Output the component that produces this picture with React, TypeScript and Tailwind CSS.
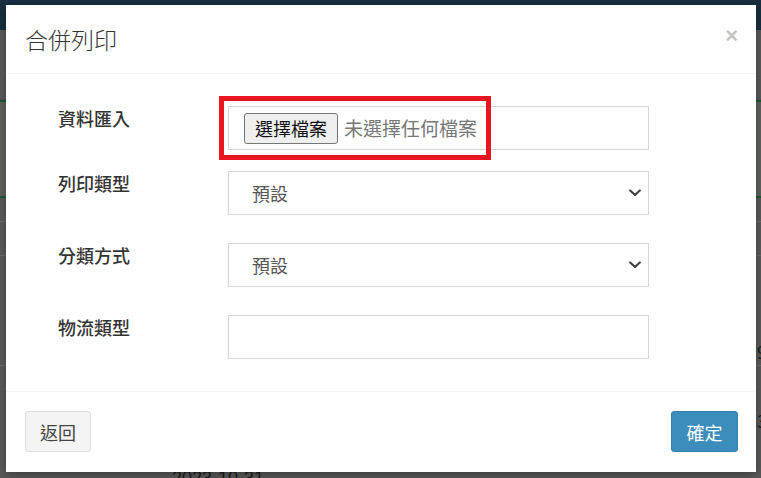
import React from "react";

function Chevron() {
  return (
    <svg width="12" height="8" viewBox="0 0 12 8" className="shrink-0">
      <path d="M1.2 1.5 L6 6 L10.8 1.5" fill="none" stroke="#444" strokeWidth="2.2" strokeLinecap="round" strokeLinejoin="round" />
    </svg>
  );
}

function Label({ children }: { children: React.ReactNode }) {
  return (
    <div className="w-[170px] shrink-0 text-[18px] leading-[24px] font-medium text-[#333]">{children}</div>
  );
}

function SelectBox({ value }: { value: string }) {
  return (
    <div className="w-[421px] h-[44px] border border-[#d2d6de] bg-white flex items-center justify-between pl-[23px] pr-[7px]">
      <span className="text-[18px] leading-[24px] text-[#555]">{value}</span>
      <Chevron />
    </div>
  );
}

export default function App() {
  return (
    <div className="relative w-[761px] h-[478px] overflow-hidden bg-[#595959] font-[family-name:'Noto_Sans_CJK_TC','Noto_Sans',sans-serif]">
      {/* dimmed page behind */}
      <div className="h-[30px] bg-[#172f3e]" />
      <div className="h-[70px] border-b border-[#505050]" />
      <div className="h-[98px] border-y-2 border-[#1d5a33] bg-[#5e615b]" />
      <div className="h-[24px] border-b border-[#6a6a6a]" />
      <div className="h-[34px] border-b border-[#6a6a6a]" />
      <div className="h-[110px] border-b border-[#6a6a6a] flex justify-end items-end">
        <span className="text-[18px] leading-[20px] text-[#1b1b1b] mr-[-6px] mb-[4px]">9</span>
      </div>
      <div className="h-[108px] flex justify-end items-center">
        <span className="text-[18px] leading-[20px] text-[#1b1b1b] mr-[-6px]">3</span>
      </div>
      <div className="pl-[172px] mt-[-6px] text-[18px] leading-[20px] text-[#1b1b1b] font-[family-name:'Liberation_Sans',sans-serif]">2023-10-31</div>

      {/* modal */}
      <div className="absolute left-[6px] top-[5px] w-[750px] h-[467px] bg-white shadow-[0_3px_9px_rgba(0,0,0,0.3)] flex flex-col">
        <div className="h-[69px] border-b border-[#f4f4f4] flex items-center justify-between pl-[19px] pr-[18px]">
          <span className="text-[23px] leading-[30px] font-light text-[#333]">合併列印</span>
          <span className="text-[22px] leading-[22px] font-bold text-[#c4c4c4] font-[family-name:'Liberation_Sans',sans-serif] mt-[-6px]">×</span>
        </div>

        <div className="h-[318px] border-b border-[#f4f4f4] pl-[52px] pt-[32px]">
          <div className="flex">
            <Label>資料匯入</Label>
            <div className="relative w-[421px] h-[44px] border border-[#d2d6de] bg-white flex items-center pl-[15px]">
              <div className="w-[94px] h-[31px] border border-[#767676] rounded-[3px] bg-[#efefef] flex items-center justify-center text-[18px] leading-[22px] text-[#111]">
                選擇檔案
              </div>
              <span className="ml-[6px] text-[19px] leading-[22px] text-[#777]">未選擇任何檔案</span>
              <div className="absolute left-[-10px] top-[-11px] w-[272px] h-[64px] border-[5px] border-[#e8141f]" />
            </div>
          </div>
          <div className="flex mt-[21px]">
            <Label>列印類型</Label>
            <SelectBox value="預設" />
          </div>
          <div className="flex mt-[28px]">
            <Label>分類方式</Label>
            <SelectBox value="預設" />
          </div>
          <div className="flex mt-[28px]">
            <Label>物流類型</Label>
            <div className="w-[421px] h-[44px] border border-[#d2d6de] bg-white" />
          </div>
        </div>

        <div className="flex-1 flex items-start justify-between pl-[19px] pr-[18px] pt-[19px]">
          <button className="w-[66px] h-[41px] rounded-[3px] border border-[#dddddd] bg-[#f4f4f4] text-[18px] leading-[22px] text-[#444]">
            返回
          </button>
          <button className="w-[67px] h-[41px] rounded-[3px] border border-[#367fa9] bg-[#3c8dbc] text-[18px] leading-[22px] text-white">
            確定
          </button>
        </div>
      </div>
    </div>
  );
}
